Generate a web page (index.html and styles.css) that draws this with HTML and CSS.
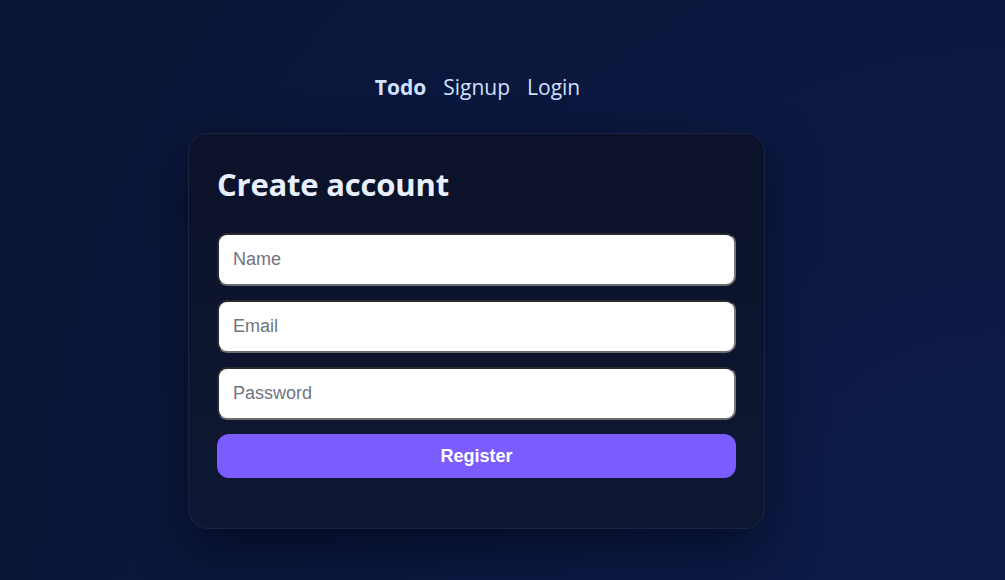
FILE: index.html
```html
<!DOCTYPE html>
<html lang="en">
<head>
<meta charset="utf-8">
<title>Create account</title>
<link rel="stylesheet" href="styles.css">
</head>
<body>
<div class="page">
  <nav class="nav">
    <a class="nav-link brand" href="#">Todo</a>
    <a class="nav-link" href="#">Signup</a>
    <a class="nav-link" href="#">Login</a>
  </nav>
  <main class="card">
    <h1 class="title">Create account</h1>
    <form class="form">
      <input class="field" type="text" placeholder="Name">
      <input class="field" type="email" placeholder="Email">
      <input class="field" type="password" placeholder="Password">
      <button class="submit" type="button">Register</button>
    </form>
  </main>
</div>
</body>
</html>
```
FILE: styles.css
```css
html, body {
  margin: 0;
  height: 100%;
}
body {
  background: radial-gradient(circle at 100% 100%, #0e1c4a 0%, #0b1840 45%, #0a1535 100%);
  font-family: "Open Sans", "Noto Sans", sans-serif;
  color: #e6eeff;
}
.page {
  display: flex;
  flex-direction: column;
  align-items: center;
  padding-top: 70px;
  padding-right: 52px;
}
.nav {
  display: flex;
  gap: 17px;
  height: 34px;
  align-items: center;
  margin-bottom: 29px;
  padding-left: 2px;
}
.nav-link {
  color: #cfe1ff;
  text-decoration: none;
  font-size: 21px;
}
.brand {
  font-weight: 700;
}
.card {
  width: 577px;
  box-sizing: border-box;
  background: linear-gradient(180deg, #0b1229 0%, #0f1833 100%);
  border: 1px solid #1a2440;
  border-radius: 20px;
  padding: 28px 28px 50px;
  box-shadow: 0 20px 50px rgba(2, 6, 20, 0.55);
}
.title {
  margin: 0 0 27px;
  font-size: 31px;
  line-height: 44px;
  font-weight: 700;
  color: #e8f0ff;
  letter-spacing: -0.2px;
}
.form {
  display: flex;
  flex-direction: column;
  gap: 14px;
}
.field {
  height: 53px;
  box-sizing: border-box;
  border-radius: 10px;
  border-width: 2px;
  border-style: solid;
  border-color: #2a2a2a #777777 #6c6c6c #2a2a2a;
  background: #ffffff;
  padding: 0 14px;
  font-family: "Liberation Sans", Arial, sans-serif;
  font-size: 18px;
  color: #222;
  outline: none;
}
.field::placeholder {
  color: #6f7480;
}
.submit {
  height: 44px;
  border: none;
  border-radius: 12px;
  background: #7b5cff;
  color: #ffffff;
  font-family: "Liberation Sans", Arial, sans-serif;
  font-size: 18px;
  font-weight: 700;
  cursor: pointer;
}
```
